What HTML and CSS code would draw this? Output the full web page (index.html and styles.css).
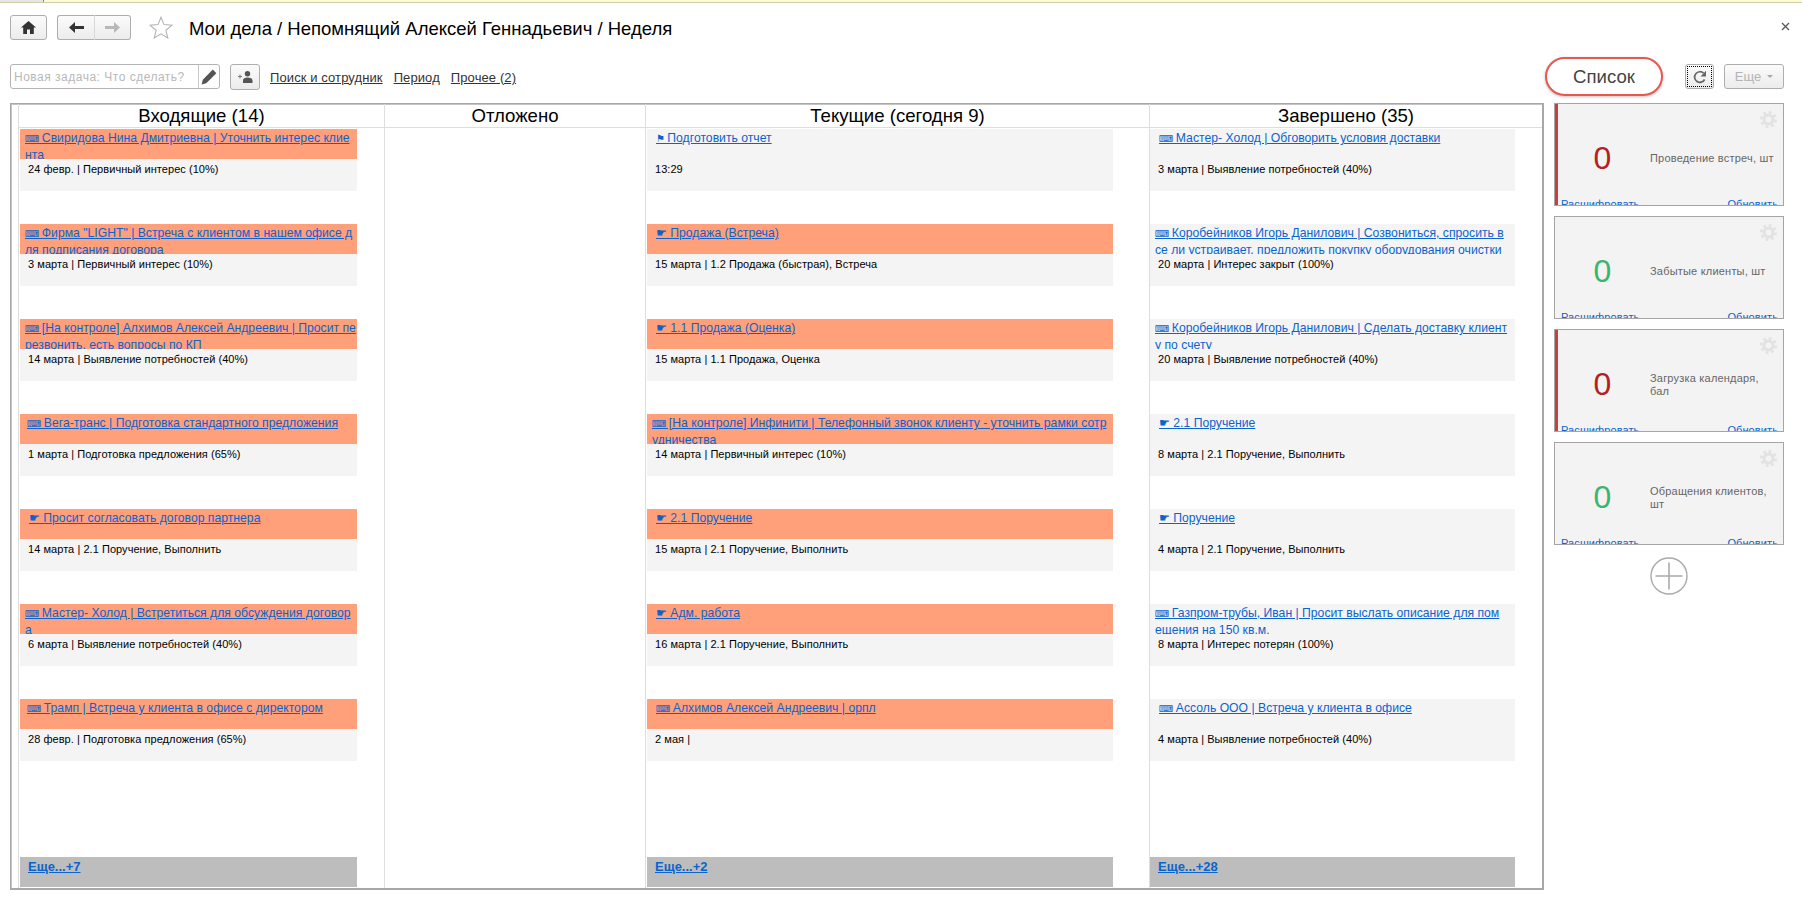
FILE: index.html
```html
<!DOCTYPE html>
<html lang="ru">
<head>
<meta charset="utf-8">
<title>Мои дела</title>
<link rel="stylesheet" href="styles.css">
</head>
<body>
<div class="strip"><div class="strip-tab"></div></div>
<header class="head">
  <button class="btn btn-home"><svg width="15" height="13" viewBox="0 0 15 13"><path fill="#333" d="M7.5 0 15 6.5H12.8V13H9V8.6H6V13H2.2V6.5H0Z"/></svg></button>
  <div class="nav-group">
    <button class="btn btn-nav"><svg width="15" height="11" viewBox="0 0 15 11"><path fill="#333" d="M0 5.5 6 0V4H15V7H6V11Z"/></svg></button>
    <button class="btn btn-nav"><svg width="15" height="11" viewBox="0 0 15 11"><path fill="#b8b8b8" d="M15 5.5 9 0V4H0V7H9V11Z"/></svg></button>
  </div>
  <svg class="star" width="24" height="23" viewBox="0 0 24 23"><path fill="#fff" stroke="#b4b4b4" stroke-width="1.1" d="M12 1.2 15 8.6 23 9.2 16.9 14.3 18.8 22 12 17.9 5.2 22 7.1 14.3 1 9.2 9 8.6Z"/></svg>
  <h1 class="title">Мои дела / Непомнящий Алексей Геннадьевич / Неделя</h1>
  <svg class="close" width="9" height="9" viewBox="0 0 9 9"><path stroke="#555" stroke-width="1.2" d="M1 1 8 8M8 1 1 8"/></svg>
</header>
<div class="toolbar">
  <div class="task">
    <input class="task-input" placeholder="Новая задача: Что сделать?">
    <span class="task-edit"><svg width="16" height="16" viewBox="0 0 16 16"><path fill="#555" d="M11.8 0.6 15.4 4.2 5.2 14.2 0.6 15.4 1.8 10.8Z"/></svg></span>
  </div>
  <button class="btn btn-person"><svg width="15" height="12" viewBox="0 0 15 12"><path fill="#555" d="M9.5 0a2.6 2.6 0 1 1 0 5.4 2.6 2.6 0 0 1 0-5.4ZM5 12V9.4C5 7.4 7 6.6 9.5 6.6S14.5 7.4 14.5 9.4V12Z"/><path stroke="#777" d="M0 5.5H4M2 3.5V7.5"/></svg></button>
  <a class="tool-link" href="#">Поиск и сотрудник</a>
  <a class="tool-link" href="#">Период</a>
  <a class="tool-link" href="#">Прочее (2)</a>
  <button class="pill">Список</button>
  <button class="btn btn-refresh"><span class="focus"><svg width="14" height="14" viewBox="0 0 14 14"><path fill="none" stroke="#666" stroke-width="1.7" d="M11.6 9.5A5.3 5.3 0 1 1 10.6 3.2"/><path fill="#666" d="M13 0.8V6.5H7.5Z"/></svg></span></button>
  <button class="btn btn-more">Еще<i class="caret"></i></button>
</div>
<main class="main">
  <section class="board">
    <div class="stripe"></div>
    <div class="col col-a">
      <h2 class="col-head">Входящие (14)</h2>
      <div class="cards">
        <article class="card hot wrapped"><div class="card-title"><a href="#"><span class="ico">⌨</span> Свиридова Нина Дмитриевна | Уточнить интерес клие<br>нта</a></div><p class="card-meta">24 февр. | Первичный интерес (10%)</p></article>
        <article class="card hot wrapped"><div class="card-title"><a href="#"><span class="ico">⌨</span> Фирма "LIGHT" | Встреча с клиентом в нашем офисе д<br>ля подписания договора</a></div><p class="card-meta">3 марта | Первичный интерес (10%)</p></article>
        <article class="card hot wrapped"><div class="card-title"><a href="#"><span class="ico">⌨</span> [На контроле] Алхимов Алексей Андреевич | Просит пе<br>резвонить, есть вопросы по КП</a></div><p class="card-meta">14 марта | Выявление потребностей (40%)</p></article>
        <article class="card hot"><div class="card-title"><a href="#"><span class="ico">⌨</span> Вега-транс | Подготовка стандартного предложения</a></div><p class="card-meta">1 марта | Подготовка предложения (65%)</p></article>
        <article class="card hot"><div class="card-title"><a href="#">☛ Просит согласовать договор партнера</a></div><p class="card-meta">14 марта | 2.1 Поручение, Выполнить</p></article>
        <article class="card hot wrapped"><div class="card-title"><a href="#"><span class="ico">⌨</span> Мастер- Холод | Встретиться для обсуждения договор<br>а</a></div><p class="card-meta">6 марта | Выявление потребностей (40%)</p></article>
        <article class="card hot"><div class="card-title"><a href="#"><span class="ico">⌨</span> Трамп | Встреча у клиента в офисе с директором</a></div><p class="card-meta">28 февр. | Подготовка предложения (65%)</p></article>
      </div>
      <div class="more"><a href="#">Еще...+7</a></div>
    </div>
    <div class="col col-b">
      <h2 class="col-head">Отложено</h2>
    </div>
    <div class="col col-c">
      <h2 class="col-head">Текущие (сегодня 9)</h2>
      <div class="cards">
        <article class="card"><div class="card-title"><a href="#"><span class="ico">⚑</span> Подготовить отчет</a></div><p class="card-meta">13:29</p></article>
        <article class="card hot"><div class="card-title"><a href="#">☛ Продажа (Встреча)</a></div><p class="card-meta">15 марта | 1.2 Продажа (быстрая), Встреча</p></article>
        <article class="card hot"><div class="card-title"><a href="#">☛ 1.1 Продажа (Оценка)</a></div><p class="card-meta">15 марта | 1.1 Продажа, Оценка</p></article>
        <article class="card hot wrapped"><div class="card-title"><a href="#"><span class="ico">⌨</span> [На контроле] Инфинити | Телефонный звонок клиенту - уточнить рамки сотр<br>удничества</a></div><p class="card-meta">14 марта | Первичный интерес (10%)</p></article>
        <article class="card hot"><div class="card-title"><a href="#">☛ 2.1 Поручение</a></div><p class="card-meta">15 марта | 2.1 Поручение, Выполнить</p></article>
        <article class="card hot"><div class="card-title"><a href="#">☛ Адм. работа</a></div><p class="card-meta">16 марта | 2.1 Поручение, Выполнить</p></article>
        <article class="card hot"><div class="card-title"><a href="#"><span class="ico">⌨</span> Алхимов Алексей Андреевич | орпл</a></div><p class="card-meta">2 мая |</p></article>
      </div>
      <div class="more"><a href="#">Еще...+2</a></div>
    </div>
    <div class="col col-d">
      <h2 class="col-head">Завершено (35)</h2>
      <div class="cards">
        <article class="card"><div class="card-title"><a href="#"><span class="ico">⌨</span> Мастер- Холод | Обговорить условия доставки</a></div><p class="card-meta">3 марта | Выявление потребностей (40%)</p></article>
        <article class="card wrapped"><div class="card-title"><a href="#"><span class="ico">⌨</span> Коробейников Игорь Данилович | Созвониться, спросить в<br>се ли устраивает, предложить покупку оборудования очистки</a></div><p class="card-meta">20 марта | Интерес закрыт (100%)</p></article>
        <article class="card wrapped"><div class="card-title"><a href="#"><span class="ico">⌨</span> Коробейников Игорь Данилович | Сделать доставку клиент<br>у по счету</a></div><p class="card-meta">20 марта | Выявление потребностей (40%)</p></article>
        <article class="card"><div class="card-title"><a href="#">☛ 2.1 Поручение</a></div><p class="card-meta">8 марта | 2.1 Поручение, Выполнить</p></article>
        <article class="card"><div class="card-title"><a href="#">☛ Поручение</a></div><p class="card-meta">4 марта | 2.1 Поручение, Выполнить</p></article>
        <article class="card wrapped"><div class="card-title"><a href="#"><span class="ico">⌨</span> Газпром-трубы, Иван | Просит выслать описание для пом<br>ещения на 150 кв.м.</a></div><p class="card-meta">8 марта | Интерес потерян (100%)</p></article>
        <article class="card"><div class="card-title"><a href="#"><span class="ico">⌨</span> Ассоль ООО | Встреча у клиента в офисе</a></div><p class="card-meta">4 марта | Выявление потребностей (40%)</p></article>
      </div>
      <div class="more"><a href="#">Еще...+28</a></div>
    </div>
  </section>
  <aside class="side">
    <div class="widget alert">
      <svg class="gear" width="17" height="17" viewBox="0 0 16 16"><circle cx="8" cy="8" r="4.2" fill="none" stroke="#e2e2e2" stroke-width="2.8"/><circle cx="8" cy="8" r="6.8" fill="none" stroke="#e2e2e2" stroke-width="2.4" stroke-dasharray="2.7 2.64"/></svg>
      <div class="widget-body"><span class="widget-num red">0</span><span class="widget-label">Проведение встреч, шт</span></div>
      <div class="widget-foot"><a href="#">Расшифровать</a><a href="#">Обновить</a></div>
    </div>
    <div class="widget">
      <svg class="gear" width="17" height="17" viewBox="0 0 16 16"><circle cx="8" cy="8" r="4.2" fill="none" stroke="#e2e2e2" stroke-width="2.8"/><circle cx="8" cy="8" r="6.8" fill="none" stroke="#e2e2e2" stroke-width="2.4" stroke-dasharray="2.7 2.64"/></svg>
      <div class="widget-body"><span class="widget-num green">0</span><span class="widget-label">Забытые клиенты, шт</span></div>
      <div class="widget-foot"><a href="#">Расшифровать</a><a href="#">Обновить</a></div>
    </div>
    <div class="widget alert">
      <svg class="gear" width="17" height="17" viewBox="0 0 16 16"><circle cx="8" cy="8" r="4.2" fill="none" stroke="#e2e2e2" stroke-width="2.8"/><circle cx="8" cy="8" r="6.8" fill="none" stroke="#e2e2e2" stroke-width="2.4" stroke-dasharray="2.7 2.64"/></svg>
      <div class="widget-body"><span class="widget-num red">0</span><span class="widget-label">Загрузка календаря, бал</span></div>
      <div class="widget-foot"><a href="#">Расшифровать</a><a href="#">Обновить</a></div>
    </div>
    <div class="widget">
      <svg class="gear" width="17" height="17" viewBox="0 0 16 16"><circle cx="8" cy="8" r="4.2" fill="none" stroke="#e2e2e2" stroke-width="2.8"/><circle cx="8" cy="8" r="6.8" fill="none" stroke="#e2e2e2" stroke-width="2.4" stroke-dasharray="2.7 2.64"/></svg>
      <div class="widget-body"><span class="widget-num green">0</span><span class="widget-label">Обращения клиентов, шт</span></div>
      <div class="widget-foot"><a href="#">Расшифровать</a><a href="#">Обновить</a></div>
    </div>
    <svg class="add" width="38" height="38" viewBox="0 0 38 38"><circle cx="19" cy="19" r="18" fill="#fff" stroke="#aaa" stroke-width="1.4"/><path stroke="#aaa" stroke-width="1.6" d="M19 5.5V32.5M5.5 19H32.5"/></svg>
  </aside>
</main>
</body>
</html>
```
FILE: styles.css
```css
* { box-sizing: border-box; }
html, body { margin: 0; padding: 0; }
body {
  width: 1802px;
  height: 901px;
  overflow: hidden;
  background: #fff;
  font-family: "Liberation Sans", "DejaVu Sans", sans-serif;
  color: #000;
}
a { color: #0b63ce; }

.strip { height: 3px; background: #fdfbd6; border-bottom: 1px solid #cfcfa8; }
.strip-tab { width: 44px; height: 2px; background: #e6e6e6; border-right: 1px solid #8a8a8a; }

.head {
  display: flex;
  align-items: center;
  height: 25px;
  margin-top: 12px;
  padding-left: 10px;
}
.btn {
  display: flex;
  align-items: center;
  justify-content: center;
  padding: 0;
  height: 25px;
  border: 1px solid #aeaeae;
  border-radius: 3px;
  background: linear-gradient(#fbfbfb, #ececec);
  font-family: inherit;
}
.btn-home { width: 37px; }
.nav-group { display: flex; margin-left: 10px; }
.btn-nav { width: 38px; }
.btn-nav:first-child { border-right-color: #d8d8d8; border-radius: 3px 0 0 3px; }
.btn-nav:last-child { border-left: 0; width: 36px; border-radius: 0 3px 3px 0; }
.star { margin-left: 18px; }
.title {
  margin: 1px 0 0 16px;
  font-size: 18.5px;
  font-weight: 400;
  line-height: 25px;
  white-space: nowrap;
}
.close { margin-left: auto; margin-right: 12px; margin-top: -2px; }

.toolbar {
  display: flex;
  align-items: center;
  height: 39px;
  margin-top: 17px;
  padding-left: 10px;
}
.task {
  display: flex;
  width: 210px;
  height: 25px;
  border: 1px solid #b4b4b4;
  border-radius: 3px;
  background: #fff;
}
.task-input {
  flex: 1;
  min-width: 0;
  border: 0;
  outline: 0;
  padding: 0 0 0 3px;
  background: transparent;
  font: 12px "Liberation Sans", sans-serif;
  letter-spacing: 0.5px;
}
.task-input::placeholder { color: #b8b8b8; opacity: 1; }
.task-edit {
  display: flex;
  align-items: center;
  justify-content: center;
  width: 21px;
  border-left: 1px solid #c8c8c8;
}
.btn-person { width: 30px; height: 26px; margin-left: 10px; margin-right: 10px; }
.tool-link {
  margin-right: 11px;
  padding-top: 1px;
  font-size: 13px;
  color: #333;
  white-space: nowrap;
  letter-spacing: 0.1px;
}
.pill {
  width: 118px;
  height: 39px;
  margin-left: auto;
  border: 2px solid #e8584f;
  border-radius: 20px;
  background: #fff;
  box-shadow: 0 1px 3px rgba(0, 0, 0, 0.25);
  font: 18.6px "Liberation Sans", sans-serif;
  color: #444;
}
.btn-refresh { width: 29px; margin-left: 22px; }
.focus {
  display: flex;
  align-items: center;
  justify-content: center;
  width: 25px;
  height: 21px;
  border: 1px dotted #000;
}
.btn-more {
  width: 60px;
  margin-left: 10px;
  margin-right: 18px;
  font-size: 13px;
  color: #b4b4b4;
}
.caret {
  width: 0;
  height: 0;
  margin-left: 6px;
  border: 3px solid transparent;
  border-top-color: #a8a8a8;
  border-bottom: 0;
}

.main {
  display: flex;
  gap: 10px;
  height: 787px;
  margin-top: 7px;
  padding-left: 10px;
}
.board {
  display: flex;
  flex: none;
  width: 1534px;
  height: 787px;
  border: 1px solid #a8a8a8;
  border-width: 1px 2px 2px 1px;
  box-shadow: inset 1px 1px 0 #c4c4c4;
}
.stripe { flex: none; width: 8px; border-right: 1px solid #dedede; }
.col {
  flex: none;
  display: flex;
  flex-direction: column;
  border-right: 1px solid #dedede;
}
.col:last-child { border-right: 0; }
.col-a { width: 366px; }
.col-b { width: 261px; }
.col-c { width: 504px; }
.col-d { width: 392px; }
.col-head {
  flex: none;
  margin: 0;
  height: 24px;
  border-bottom: 1px solid #dedede;
  font-size: 18.6px;
  font-weight: 400;
  line-height: 24px;
  text-align: center;
  white-space: nowrap;
}
.cards {
  flex: 1;
  display: flex;
  flex-direction: column;
  gap: 33px;
  padding-top: 1px;
}
.col-a .cards, .col-a .more { margin: 0 27px 0 1px; }
.col-c .cards, .col-c .more { margin: 0 36px 0 1px; }
.col-d .cards, .col-d .more { margin: 0 27px 0 0; }
.card {
  height: 62px;
  background: #f4f4f4;
}
.card-title {
  height: 30px;
  overflow: hidden;
  padding: 1px 0 0 9px;
  font-size: 12.2px;
  line-height: 16px;
  white-space: nowrap;
}
.ico { margin-right: -1px; font-size: 10px; }
.col-a .card:not(.wrapped) .ico { margin-left: -2px; }
.hot .card-title { background: #ffa07a; }
.wrapped .card-title { padding-left: 5px; }
.card-meta {
  margin: 0;
  padding-left: 8px;
  font-size: 11px;
  line-height: 20px;
  letter-spacing: 0.05px;
  white-space: nowrap;
}
.more {
  flex: none;
  height: 30px;
  margin-bottom: 1px !important;
  padding: 2px 0 0 8px;
  background: #bdbdbd;
  font-size: 13px;
  font-weight: 700;
  line-height: 15px;
}

.side {
  display: flex;
  flex-direction: column;
  gap: 10px;
  width: 230px;
}
.widget {
  position: relative;
  height: 103px;
  overflow: hidden;
  border: 1px solid #a5a5a5;
  background: #f3f3f3;
  color: #666;
}
.alert { box-shadow: inset 3px 0 0 #cb3f3f; }
.gear { position: absolute; top: 7px; right: 6px; }
.widget-body {
  display: flex;
  align-items: center;
  height: 77px;
  margin-top: 16px;
}
.widget-num {
  flex: none;
  width: 95px;
  font-size: 32px;
  text-align: center;
}
.red { color: #b22222; }
.green { color: #3cb371; }
.widget-label {
  width: 125px;
  font-size: 11px;
  line-height: 13px;
  letter-spacing: 0.2px;
}
.widget-foot {
  display: flex;
  justify-content: space-between;
  padding: 0 5px 0 6px;
  font-size: 11px;
  line-height: 14px;
  letter-spacing: 0.1px;
}
.widget-foot a { text-decoration: none; }
.add { align-self: center; margin-top: 2px; }
```
